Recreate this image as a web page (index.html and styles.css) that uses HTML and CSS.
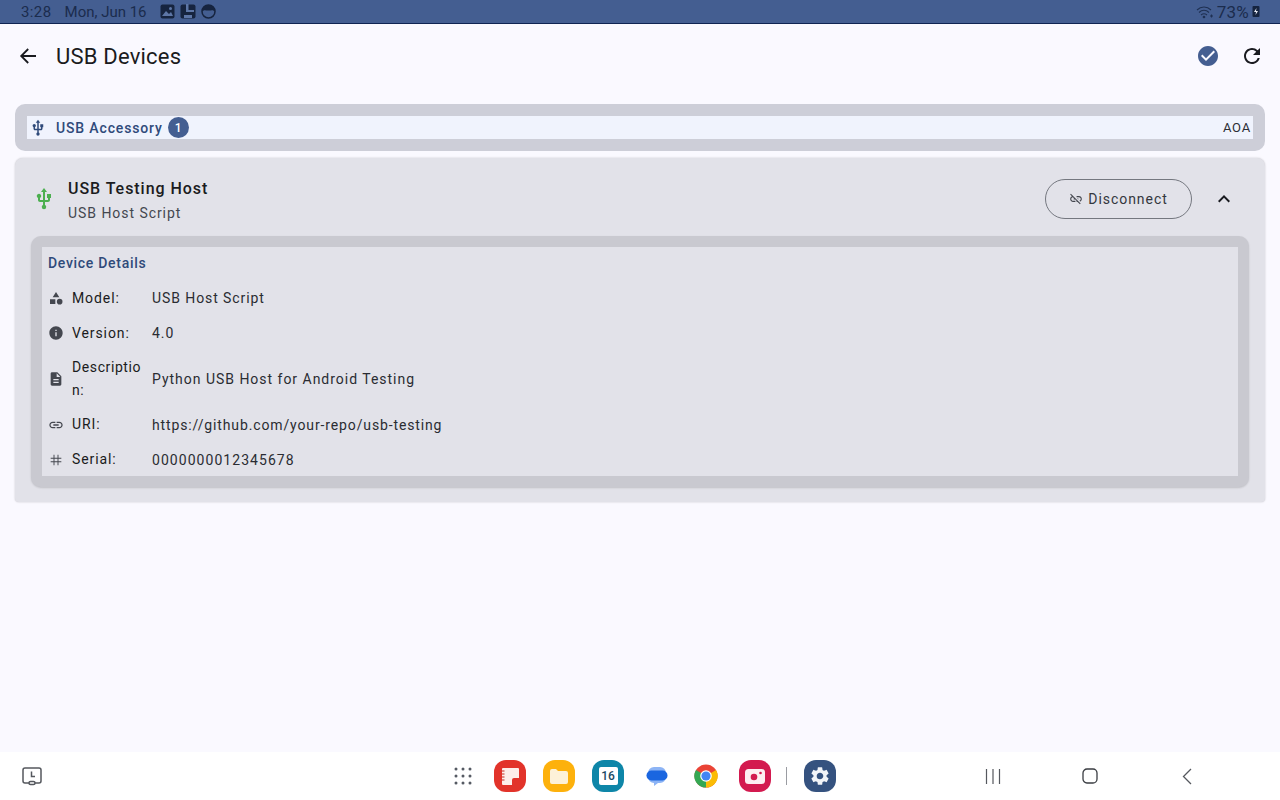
FILE: index.html
```html
<!DOCTYPE html>
<html lang="en">
<head>
<meta charset="utf-8">
<title>USB Devices</title>
<link rel="stylesheet" href="styles.css">
</head>
<body>
<div class="screen">
  <header class="status">
    <div class="status-left">
      <span class="time">3:28</span>
      <span class="date">Mon, Jun 16</span>
      <span class="status-icons">
        <svg width="15" height="15" viewBox="0 0 15 15"><rect x="0.5" y="0.5" width="14" height="14" rx="2" fill="#16243f"/><path d="M2 12l4-5 3 3 2-2 2 4z" fill="#5d76a6"/><circle cx="10.500" cy="4.500" r="1.500" fill="#5d76a6"/></svg>
        <svg width="16" height="15" viewBox="0 0 16 15"><rect x="0.500" y="0.500" width="15" height="14" rx="2" fill="#16243f"/><path d="M6 0h2.500v6H14v2H6zM4 11h8v3H4z" fill="#5d76a6"/></svg>
        <svg width="15" height="15" viewBox="0 0 15 15"><circle cx="7.500" cy="7.500" r="6.500" fill="none" stroke="#16243f" stroke-width="1.500"/><path d="M1.500 7.500C1.500 3 4.500 1 7.500 1s6 2 6 6.500C12 5.500 10.500 6.500 7.500 6.500S3 5.500 1.500 7.500z" fill="#16243f"/></svg>
      </span>
    </div>
    <div class="status-right">
      <svg width="18" height="14" viewBox="0 0 18 14" fill="none" stroke="#1f3052" stroke-width="1.100"><path d="M1 5c4-4 10-4 14 0M3 7.500c3-3 7-3 10 0M5 10c2-1.700 4-1.700 6 0"/><circle cx="8" cy="12" r="0.800" fill="#1f3052"/><path d="M14 11h3M15.500 9.500v3"/></svg>
      <span class="percent">73%</span>
      <svg width="8" height="11" viewBox="0 0 7 11"><rect width="7" height="11" y="0" rx="1" fill="#16243f"/><path d="M4 2L1.500 6H3.500L3 9 5.500 5H3.500z" fill="#e8eaf2"/></svg>
    </div>
  </header>

  <main class="app">
    <div class="appbar">
      <svg class="back" width="24" height="24" viewBox="0 0 24 24" fill="none" stroke="#1a1b20" stroke-width="1.800"><path d="M20 12H5.500M12.200 5l-7 7 7 7"/></svg>
      <h1 class="title">USB Devices</h1>
      <div class="actions">
        <svg width="24" height="24" viewBox="0 0 24 24"><path d="M12 2C6.480 2 2 6.480 2 12s4.480 10 10 10 10-4.480 10-10S17.520 2 12 2zm-2 15l-5-5 1.410-1.410L10 14.170l7.590-7.590L19 8l-9 9z" fill="#445e91"/></svg>
        <svg width="24" height="24" viewBox="0 0 24 24"><path d="M17.650 6.350A7.958 7.958 0 0 0 12 4c-4.420 0-7.990 3.580-7.990 8s3.570 8 7.990 8c3.730 0 6.840-2.550 7.730-6h-2.080A5.990 5.990 0 0 1 12 18c-3.310 0-6-2.690-6-6s2.690-6 6-6c1.660 0 3.140.69 4.220 1.780L13 11h7V4l-2.350 2.350z" fill="#1a1b20"/></svg>
      </div>
    </div>

    <section class="group">
      <div class="group-inner">
        <svg class="usb-small" width="18" height="18" viewBox="0 0 24 24"><path d="M15 7v4h1v2h-3V5h2l-3-4-3 4h2v8H8v-2.070c.700-.370 1.200-1.080 1.200-1.930 0-1.210-.990-2.200-2.200-2.200S4.800 7.790 4.800 9c0 .850.500 1.560 1.200 1.930V13c0 1.110.890 2 2 2h3v3.050c-.710.370-1.200 1.100-1.200 1.950A2.200 2.200 0 0 0 12 22.200a2.200 2.200 0 0 0 2.200-2.200c0-.850-.490-1.580-1.200-1.950V15h3c1.110 0 2-.890 2-2v-2h1V7h-4z" fill="#2f4a7a"/></svg>
        <span class="group-label">USB Accessory</span>
        <span class="badge">1</span>
        <span class="aoa">AOA</span>
      </div>
    </section>

    <section class="card">
      <div class="card-head">
        <svg class="usb-green" width="24" height="24" viewBox="0 0 24 24"><path d="M15 7v4h1v2h-3V5h2l-3-4-3 4h2v8H8v-2.070c.700-.370 1.200-1.080 1.200-1.930 0-1.210-.990-2.200-2.200-2.200S4.800 7.790 4.800 9c0 .850.500 1.560 1.200 1.930V13c0 1.110.890 2 2 2h3v3.050c-.710.370-1.200 1.100-1.200 1.950A2.200 2.200 0 0 0 12 22.200a2.200 2.200 0 0 0 2.200-2.200c0-.850-.490-1.580-1.200-1.950V15h3c1.110 0 2-.890 2-2v-2h1V7h-4z" fill="#4caf50"/></svg>
        <div class="head-text">
          <div class="device-name">USB Testing Host</div>
          <div class="device-sub">USB Host Script</div>
        </div>
        <button class="disconnect">
          <svg width="14" height="14" viewBox="0 0 24 24"><path d="M17 7h-4v1.900h4c1.710 0 3.100 1.390 3.100 3.100 0 1.430-.980 2.630-2.310 2.980l1.460 1.460C20.880 15.610 22 13.950 22 12c0-2.760-2.240-5-5-5zm-1 4h-2.190l2 2H16zM2 4.270l3.110 3.110C3.290 8.120 2 9.910 2 12c0 2.760 2.240 5 5 5h4v-1.900H7c-1.710 0-3.100-1.390-3.100-3.100 0-1.590 1.210-2.900 2.760-3.070L8.730 11H8v2h2.730L13 15.270V17h1.730l4.010 4L20 19.740 3.270 3 2 4.270z" fill="#44474f"/></svg>
          <span>Disconnect</span>
        </button>
        <svg class="chevron" width="24" height="24" viewBox="0 0 24 24"><path d="M12 8l-6 6 1.410 1.410L12 10.830l4.590 4.580L18 14z" fill="#1a1b20"/></svg>
      </div>

      <div class="details">
        <div class="details-inner">
          <h2 class="details-title">Device Details</h2>
          <div class="row">
            <svg class="row-icon" width="16" height="16" viewBox="0 0 24 24"><path d="M12 3l5 8H7z M3 14h8v7H3z" fill="#44474f"/><circle cx="17.500" cy="17.500" r="4.200" fill="#44474f"/></svg>
            <span class="row-label">Model:</span><span class="row-value">USB Host Script</span>
          </div>
          <div class="row">
            <svg class="row-icon" width="16" height="16" viewBox="0 0 24 24"><path d="M12 2C6.480 2 2 6.480 2 12s4.480 10 10 10 10-4.480 10-10S17.520 2 12 2zm1 15h-2v-6h2v6zm0-8h-2V7h2v2z" fill="#44474f"/></svg>
            <span class="row-label">Version:</span><span class="row-value">4.0</span>
          </div>
          <div class="row row-tall">
            <svg class="row-icon" width="16" height="16" viewBox="0 0 24 24"><path d="M14 2H6c-1.100 0-2 .900-2 2v16c0 1.100.890 2 1.990 2H18c1.100 0 2-.900 2-2V8l-6-6zm2 16H8v-2h8v2zm0-4H8v-2h8v2zm-3-5V3.500L18.500 9H13z" fill="#44474f"/></svg>
            <span class="row-label">Description:</span><span class="row-value value-wide">Python USB Host for Android Testing</span>
          </div>
          <div class="row row-low">
            <svg class="row-icon" width="16" height="16" viewBox="0 0 24 24"><path d="M3.900 12c0-1.710 1.390-3.100 3.100-3.100h4V7H7c-2.760 0-5 2.240-5 5s2.240 5 5 5h4v-1.900H7c-1.710 0-3.100-1.390-3.100-3.100zM8 13h8v-2H8v2zm9-6h-4v1.900h4c1.710 0 3.100 1.390 3.100 3.100s-1.390 3.100-3.100 3.100h-4V17h4c2.760 0 5-2.240 5-5s-2.240-5-5-5z" fill="#44474f"/></svg>
            <span class="row-label">URI:</span><span class="row-value value-narrow">https://github.com/your-repo/usb-testing</span>
          </div>
          <div class="row row-low">
            <svg class="row-icon" width="16" height="16" viewBox="0 0 24 24"><path d="M20 10.200V8.800h-4.300V4h-1.400v4.800H9.700V4H8.300v4.800H4v1.400h4.300v3.600H4v1.400h4.300V20h1.400v-4.800h4.600V20h1.400v-4.800H20v-1.400h-4.300v-3.600H20zm-5.700 3.600H9.700v-3.600h4.600v3.600z" fill="#44474f"/></svg>
            <span class="row-label">Serial:</span><span class="row-value value-num">0000000012345678</span>
          </div>
        </div>
      </div>
    </section>
  </main>

  <footer class="navbar">
    <svg class="recent-app" width="22" height="22" viewBox="0 0 22 22" fill="none" stroke="#55585e" stroke-width="1.500"><path d="M8 18H4a2 2 0 0 1-2-2V5a2 2 0 0 1 2-2h14a2 2 0 0 1 2 2v11a2 2 0 0 1-2 2h-4"/><rect x="8" y="16.500" width="6" height="3" rx="1.500"/><path d="M10.500 6.500v5h3.500"/></svg>
    <div class="dock">
      <svg class="grid-icon" width="18" height="18" viewBox="0 0 18 18" fill="#555a63"><circle cx="2" cy="2" r="1.500"/><circle cx="9" cy="2" r="1.500"/><circle cx="16" cy="2" r="1.500"/><circle cx="2" cy="9" r="1.500"/><circle cx="9" cy="9" r="1.500"/><circle cx="16" cy="9" r="1.500"/><circle cx="2" cy="16" r="1.500"/><circle cx="9" cy="16" r="1.500"/><circle cx="16" cy="16" r="1.500"/></svg>
      <span class="app-icon notes"><svg width="19" height="19" viewBox="0 0 19 19"><path d="M2 1h15a1 1 0 0 1 1 1v9h-5a2 2 0 0 0-2 2v5H2a1 1 0 0 1-1-1V2a1 1 0 0 1 1-1z" fill="#fdeeea"/><path d="M1 4h2.500M1 7h2.500M1 10h2.500M1 13h2.500" stroke="#c42a22" stroke-width="1"/></svg></span>
      <span class="app-icon files"><svg width="20" height="17" viewBox="0 0 20 17"><path d="M1 3a2 2 0 0 1 2-2h4l2 2h8a2 2 0 0 1 2 2v9a2 2 0 0 1-2 2H3a2 2 0 0 1-2-2z" fill="#fdf1d8"/></svg></span>
      <span class="app-icon calendar"><span class="cal-page">16</span></span>
      <span class="app-icon plain"><svg width="24" height="22" viewBox="0 0 24 22"><path d="M3 8a6 6 0 0 1 6-6h6a6 6 0 0 1 6 6v4a6 6 0 0 1-6 6h-2l-4 3v-3a6 6 0 0 1-6-6z" fill="#8db4f5"/><rect x="1.500" y="5.500" width="21" height="10" rx="5" fill="#1a66e0"/></svg></span>
      <span class="app-icon plain"><svg width="24" height="24" viewBox="0 0 24 24"><circle cx="12" cy="12" r="11.500" fill="#ea4335"/><path d="M12 12L22 6a11.500 11.500 0 0 1-10 17.500z" fill="#fbbc05"/><path d="M12 12l0 11.500A11.500 11.500 0 0 1 2 6z" fill="#34a853"/><circle cx="12" cy="12" r="5.800" fill="#fff"/><circle cx="12" cy="12" r="4.600" fill="#4285f4"/></svg></span>
      <span class="app-icon camera"><svg width="20" height="15" viewBox="0 0 20 15"><rect width="20" height="15" rx="3.500" fill="#fdeef1"/><circle cx="9" cy="8" r="3.300" fill="#d31a4f"/><circle cx="15.500" cy="4" r="1.300" fill="#d31a4f"/></svg></span>
      <span class="dock-sep"></span>
      <span class="app-icon settings"><svg width="22" height="22" viewBox="0 0 24 24"><path d="M19.140 12.940c.040-.300.060-.610.060-.940 0-.320-.020-.640-.070-.940l2.030-1.580a.49.49 0 0 0 .120-.610l-1.920-3.320a.488.488 0 0 0-.590-.220l-2.390.960c-.500-.380-1.030-.700-1.620-.940l-.360-2.540a.484.484 0 0 0-.480-.410h-3.840c-.240 0-.430.170-.470.410l-.360 2.540c-.590.240-1.130.570-1.620.940l-2.390-.960c-.220-.080-.470 0-.590.220L2.740 8.870c-.120.210-.080.470.120.610l2.030 1.580c-.050.300-.090.630-.090.940s.020.640.070.940l-2.030 1.580a.49.49 0 0 0-.120.610l1.920 3.320c.120.220.370.290.590.220l2.390-.960c.500.380 1.030.700 1.620.940l.360 2.540c.050.240.240.410.480.410h3.840c.240 0 .440-.170.470-.410l.360-2.540c.590-.240 1.130-.560 1.620-.940l2.390.960c.220.080.470 0 .590-.220l1.920-3.320c.120-.220.070-.470-.120-.610l-2.010-1.580zM12 15.600A3.610 3.610 0 0 1 8.400 12c0-1.980 1.620-3.600 3.600-3.600s3.600 1.620 3.600 3.600-1.620 3.600-3.600 3.600z" fill="#f2f4f8"/></svg></span>
    </div>
    <div class="sysnav">
      <svg width="16" height="15" viewBox="0 0 16 15" stroke="#55585e" stroke-width="1.200"><path d="M1.500 0v15M8 0v15M14.500 0v15"/></svg>
      <svg width="16" height="16" viewBox="0 0 16 16" fill="none" stroke="#3a3d42" stroke-width="1.300"><rect x="1" y="1" width="14" height="14" rx="4"/></svg>
      <svg class="sys-back" width="10" height="17" viewBox="0 0 10 17" fill="none" stroke="#55585e" stroke-width="1.300"><path d="M9 1L1.500 8.500 9 16"/></svg>
    </div>
  </footer>
</div>
</body>
</html>
```
FILE: styles.css
```css
* { box-sizing: border-box; }
html, body { margin: 0; padding: 0; }
body { font-family: Roboto, "Liberation Sans", sans-serif; background: #faf9ff; color: #1a1b20; }
.screen { width: 1280px; height: 800px; display: flex; flex-direction: column; overflow: hidden; }
svg { display: block; flex: none; }

.status { height: 24px; flex: none; background: #445e91; border-bottom: 1px solid #0f2452; display: flex; justify-content: space-between; align-items: center; padding: 0 20px 0 21px; color: #1b2c4d; font-size: 15px; letter-spacing: 0.4px; }
.status-left { display: flex; align-items: center; }
.time { margin-right: 13px; }
.date { margin-right: 13px; letter-spacing: 0; }
.status-icons { display: flex; gap: 5px; align-items: center; }
.status-right { display: flex; align-items: center; gap: 3px; }
.percent { font-size: 17px; letter-spacing: 0.2px; }

.app { flex: 1; padding: 0 15px; }
.appbar { height: 64px; display: flex; align-items: center; }
.back { margin-left: 1px; }
.title { font-size: 22px; font-weight: 400; margin: 0 0 0 16px; flex: 1; letter-spacing: 0.2px; }
.actions { display: flex; gap: 20px; margin-right: 1px; }

.group { margin-top: 16px; height: 47px; background: #cdced8; border-radius: 10px; padding: 12px; }
.group-inner { height: 23px; background: #f0f3fd; display: flex; align-items: center; padding: 0 2px 0 2px; }
.usb-small { margin-right: 9px; }
.group-label { font-size: 14px; font-weight: 500; color: #2f4a7a; letter-spacing: 0.85px; margin-right: 5px; }
.badge { width: 21px; height: 21px; border-radius: 50%; background: #445e91; color: #fff; font-size: 12px; font-weight: 500; display: flex; align-items: center; justify-content: center; }
.aoa { margin-left: auto; font-size: 13px; letter-spacing: 0.8px; color: #2b2e35; }

.card { margin-top: 7px; height: 344px; background: #e2e2e9; border-radius: 8px 8px 4px 4px; padding: 0 16px; box-shadow: 0 0 2px rgba(0,0,0,0.22); }
.card-head { height: 78px; display: flex; align-items: center; padding: 4px 12px 0 0; }
.usb-green { margin-left: 1px; }
.head-text { margin-left: 12px; flex: 1; padding-top: 2px; }
.device-name { font-size: 16px; font-weight: 500; letter-spacing: 0.95px; line-height: 24px; }
.device-sub { font-size: 14px; color: #44474f; letter-spacing: 0.95px; line-height: 20px; margin-top: 2px; }
.disconnect { width: 147px; height: 40px; border: 1px solid #74777f; border-radius: 20px; background: transparent; font-family: inherit; font-size: 14px; font-weight: 400; color: #34373e; letter-spacing: 0.95px; display: flex; align-items: center; justify-content: center; gap: 5px; padding: 0; }
.chevron { margin: 0 1px 0 20px; }

.details { height: 251px; background: #c9c9d0; border-radius: 10px; padding: 11px; box-shadow: 0 1px 2px rgba(0,0,0,0.15); }
.details-inner { height: 229px; background: #e2e2e9; padding: 6px; }
.details-title { font-size: 14px; font-weight: 500; color: #2f4a7a; letter-spacing: 0.7px; line-height: 20px; margin: 0 0 7px; }
.row { display: flex; align-items: center; height: 35px; }
.row-tall { height: 57px; }
.row-icon { margin-right: 8px; }
.row-label { width: 80px; padding-right: 6px; padding-top: 2px; font-size: 14px; line-height: 23px; letter-spacing: 0.9px; color: #1a1b20; overflow-wrap: anywhere; }
.row-tall .row-label { padding-top: 0; letter-spacing: 0.6px; }
.row-low .row-label { padding-top: 0; }
.row-value { font-size: 14px; letter-spacing: 0.92px; color: #2a2c32; }
.value-wide { letter-spacing: 0.98px; }
.value-narrow { letter-spacing: 0.87px; }
.value-num { letter-spacing: 1.05px; }

.navbar { height: 48px; flex: none; background: #fff; display: flex; align-items: center; position: relative; }
.recent-app { margin-left: 21px; }
.dock { display: flex; align-items: center; margin-left: 411px; }
.grid-icon { margin-right: 22px; }
.app-icon { width: 32px; height: 32px; border-radius: 12px; display: flex; align-items: center; justify-content: center; margin-right: 17px; }
.notes { background: #e2332a; }
.files { background: #fdb10c; }
.calendar { background: #0e86a8; }
.cal-page { width: 19px; height: 18px; background: #fff; color: #1b4a63; font-size: 12px; font-weight: 500; display: flex; align-items: center; justify-content: center; border-radius: 2px; }
.plain { background: #fff; }
.camera { background: #d31a4f; margin-right: 15px; }
.dock-sep { width: 1px; height: 18px; background: #9a9ca2; margin-right: 17px; }
.settings { background: #35527f; }
.sysnav { display: flex; align-items: center; gap: 81px; margin-left: 132px; }
.sys-back { margin-left: 3px; }
```
